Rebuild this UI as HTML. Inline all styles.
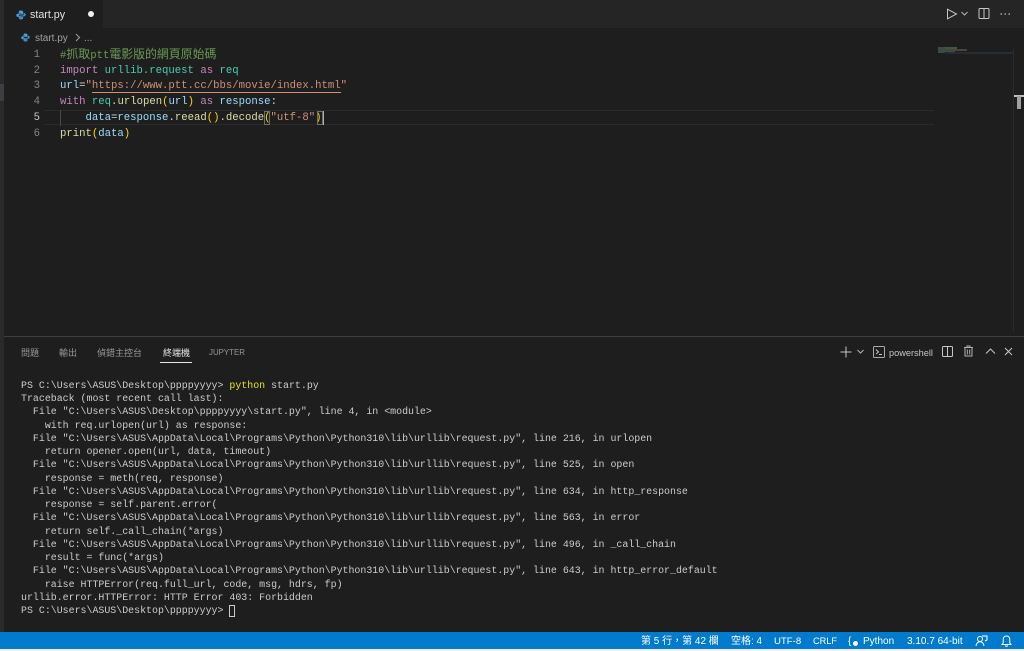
<!DOCTYPE html>
<html><head><meta charset="utf-8">
<style>
html,body{margin:0;padding:0;background:#1e1e1e;}
#r{position:relative;width:1024px;height:651px;overflow:hidden;background:#1e1e1e;font-family:"Liberation Sans","Noto Sans CJK TC",sans-serif;}
.a{position:absolute;}
.l{position:absolute;white-space:pre;font-family:"Liberation Mono","Noto Sans CJK TC",monospace;}
.e{left:60px;font-size:10.63px;line-height:16px;height:16px;color:#d4d4d4;}
.n{position:absolute;left:20px;width:20px;text-align:right;font-family:"Liberation Mono",monospace;font-size:10.63px;line-height:16px;color:#858585;}
.t{left:21px;font-size:9.93px;line-height:13px;color:#cccccc;}
.k{color:#c586c0}.c{color:#4ec9b0}.v{color:#9cdcfe}.s{color:#ce9178}.y{color:#ffd700}.f{color:#dcdcaa}.g{color:#6a9955}
.tab{position:absolute;top:347px;font-size:9px;line-height:12px;color:#969696;white-space:nowrap;}
.st{position:absolute;top:635px;font-size:10px;line-height:13px;color:#fff;white-space:nowrap;}
svg{position:absolute;overflow:visible;}
</style></head><body><div id="r">
<div class="a" style="left:0;top:0;width:1024px;height:28px;background:#252526"></div>
<div class="a" style="left:4px;top:0;width:99px;height:28px;background:#1e1e1e"></div>
<div class="a" style="left:0;top:0;width:4px;height:632px;background:#2a2a2b"></div>
<div class="a" style="left:0;top:84px;width:4px;height:17px;background:#3d3d42"></div>

<svg style="left:16px;top:10px" width="10" height="10" viewBox="0 0 10 10"><path d="M5 0.5C3 0.5 2.8 1.3 2.8 2.2V3.2H5.2V3.6H1.8C0.8 3.6 0.3 4.4 0.3 5.3S0.8 7 1.8 7H2.8V5.8C2.8 5 3.4 4.5 4.1 4.5H6C6.7 4.5 7.2 4 7.2 3.3V2C7.2 1 6.3 .5 5 .5Z" fill="#4b9fd8"/><path d="M5 9.5C7 9.5 7.2 8.7 7.2 7.8V6.8H4.8V6.4H8.2C9.2 6.4 9.7 5.6 9.7 4.7S9.2 3 8.2 3H7.6V4.2C7.6 5 7 5.5 6.3 5.5H4C3.3 5.5 2.8 6 2.8 6.7V8C2.8 9 3.7 9.5 5 9.5Z" fill="#3f8fc6"/></svg>
<div class="a" style="left:30px;top:9px;font-size:10.7px;line-height:13px;color:#e0e0e0">start.py</div>
<div class="a" style="left:88px;top:11px;width:6px;height:6px;border-radius:50%;background:#f0f0f0"></div>

<svg style="left:946px;top:8px" width="12" height="12" viewBox="0 0 12 12"><path d="M1.5 1.2V10.8L10.5 6Z" fill="none" stroke="#c5c5c5" stroke-width="1"/></svg>
<svg style="left:961px;top:11px" width="7" height="5" viewBox="0 0 7 5"><path d="M.5 1L3.5 4L6.5 1" fill="none" stroke="#b5b5b5" stroke-width="1"/></svg>
<svg style="left:978px;top:8px" width="12" height="11" viewBox="0 0 12 11"><rect x="1" y=".5" width="10" height="10" rx="1" fill="none" stroke="#c5c5c5"/><path d="M6 .5V10.5" stroke="#c5c5c5"/></svg>
<svg style="left:1000px;top:13px" width="11" height="3" viewBox="0 0 11 3"><circle cx="1.2" cy="1" r=".8" fill="#c5c5c5"/><circle cx="5.2" cy="1" r=".8" fill="#c5c5c5"/><circle cx="9.2" cy="1" r=".8" fill="#c5c5c5"/></svg>

<svg style="left:21px;top:33px" width="9" height="9" viewBox="0 0 10 10"><path d="M5 0.5C3 0.5 2.8 1.3 2.8 2.2V3.2H5.2V3.6H1.8C0.8 3.6 0.3 4.4 0.3 5.3S0.8 7 1.8 7H2.8V5.8C2.8 5 3.4 4.5 4.1 4.5H6C6.7 4.5 7.2 4 7.2 3.3V2C7.2 1 6.3 .5 5 .5Z" fill="#4b9fd8"/><path d="M5 9.5C7 9.5 7.2 8.7 7.2 7.8V6.8H4.8V6.4H8.2C9.2 6.4 9.7 5.6 9.7 4.7S9.2 3 8.2 3H7.6V4.2C7.6 5 7 5.5 6.3 5.5H4C3.3 5.5 2.8 6 2.8 6.7V8C2.8 9 3.7 9.5 5 9.5Z" fill="#3f8fc6"/></svg>
<div class="a" style="left:35px;top:32px;font-size:10px;line-height:13px;color:#a0a0a0">start.py</div>
<svg style="left:75px;top:33px" width="6" height="9" viewBox="0 0 6 9"><path d="M1 1L4.5 4.5L1 8" fill="none" stroke="#a0a0a0"/></svg>
<div class="a" style="left:84px;top:32px;font-size:10px;line-height:13px;color:#a0a0a0">...</div>

<div class="a" style="left:44px;top:110px;width:890px;height:15px;border-top:1px solid #2a2a2a;border-bottom:1px solid #2a2a2a;box-sizing:border-box"></div>
<div class="a" style="left:60px;top:110px;width:1px;height:16px;background:#484848"></div>

<div class="n" style="top:47px">1</div>
<div class="n" style="top:63px">2</div>
<div class="n" style="top:78px">3</div>
<div class="n" style="top:94px">4</div>
<div class="n" style="top:110px;color:#c6c6c6">5</div>
<div class="n" style="top:126px">6</div>

<div class="l e g" style="top:47px">#<span style="font-size:11.9px">抓取</span>ptt<span style="font-size:11.9px">電影版的網頁原始碼</span></div>
<div class="l e" style="top:63px"><span class="k">import</span> <span class="c">urllib.request</span> <span class="k">as</span> <span class="c">req</span></div>
<div class="l e" style="top:78px"><span class="v">url</span>=<span class="s">"<span style="border-bottom:1px solid #ce9178">https://www.ptt.cc/bbs/movie/index.html</span>"</span></div>
<div class="l e" style="top:94px"><span class="k">with</span> <span class="c">req</span>.<span class="f">urlopen</span><span class="y">(</span><span class="v">url</span><span class="y">)</span> <span class="k">as</span> <span class="v">response</span>:</div>
<div class="l e" style="top:110px">    <span class="v">data</span>=<span class="v">response</span>.<span class="f">reead</span><span class="y">()</span>.<span class="f">decode</span><span class="y">(</span><span class="s">"utf-8"</span><span class="y">)</span></div>
<div class="l e" style="top:126px"><span class="f">print</span><span class="y">(</span><span class="v">data</span><span class="y">)</span></div>
<div class="a" style="left:264px;top:111px;width:6px;height:14px;border:1px solid #6f6f6f;box-sizing:border-box"></div>
<div class="a" style="left:317px;top:111px;width:6px;height:14px;border:1px solid #6f6f6f;box-sizing:border-box"></div>
<div class="a" style="left:323px;top:111px;width:1px;height:14px;background:#aeafad"></div>

<div class="a" style="left:938px;top:47px;width:7px;height:6px;background:#3c4a44"></div>
<div class="a" style="left:945px;top:47px;width:12px;height:2px;background:#3f5a3c"></div>
<div class="a" style="left:945px;top:49px;width:22px;height:2px;background:#4a4340"></div>
<div class="a" style="left:945px;top:51px;width:10px;height:1px;background:#3d4a52"></div>
<div class="a" style="left:946px;top:52px;width:67px;height:2px;background:#232d36"></div>
<div class="a" style="left:1013px;top:47px;width:1px;height:285px;background:#2a2a2a"></div>
<div class="a" style="left:1014px;top:95px;width:10px;height:2px;background:#c0c0c0"></div>
<div class="a" style="left:1017px;top:96px;width:4px;height:13px;background:#a0a0a0"></div>

<div class="a" style="left:4px;top:336px;width:1020px;height:1px;background:#3f3f3f"></div>
<div class="tab" style="left:21px">問題</div>
<div class="tab" style="left:59px">輸出</div>
<div class="tab" style="left:97px">偵錯主控台</div>
<div class="tab" style="left:163px;color:#e7e7e7">終端機</div>
<div class="tab" style="left:209px;font-size:7.9px">JUPYTER</div>
<div class="a" style="left:160px;top:362px;width:32px;height:1px;background:#e7e7e7"></div>

<svg style="left:840px;top:346px" width="12" height="12" viewBox="0 0 12 12"><path d="M6 .5V11.5M.5 6H11.5" stroke="#c5c5c5" stroke-width="1"/></svg>
<svg style="left:857px;top:349px" width="7" height="5" viewBox="0 0 7 5"><path d="M.5 1L3.5 4L6.5 1" fill="none" stroke="#b5b5b5"/></svg>
<svg style="left:873px;top:346px" width="12" height="12" viewBox="0 0 12 12"><rect x=".5" y=".5" width="11" height="11" rx="1" fill="none" stroke="#a8a8a8"/><path d="M3 3.5L5.5 6L3 8M6 8.5H9" fill="none" stroke="#c5c5c5"/></svg>
<div class="a" style="left:889px;top:347px;font-size:9.2px;line-height:12px;color:#c5c5c5">powershell</div>
<svg style="left:942px;top:346px" width="11" height="11" viewBox="0 0 11 11"><rect x=".5" y=".5" width="10" height="10" rx="1" fill="none" stroke="#c5c5c5"/><path d="M5.5 .5V10.5" stroke="#c5c5c5"/></svg>
<svg style="left:963px;top:345px" width="11" height="12" viewBox="0 0 11 12"><path d="M1 2.5H10M4 2.5V1H7V2.5M2 2.5V11H9V2.5M4.3 4.5V9.5M6.7 4.5V9.5" fill="none" stroke="#b0b0b0"/></svg>
<svg style="left:985px;top:347px" width="11" height="8" viewBox="0 0 11 8"><path d="M1 6.5L5.5 2L10 6.5" fill="none" stroke="#c5c5c5"/></svg>
<svg style="left:1004px;top:347px" width="9" height="9" viewBox="0 0 9 9"><path d="M1 1L8 8M8 1L1 8" fill="none" stroke="#c5c5c5"/></svg>

<div class="l t" style="top:379px">PS C:\Users\ASUS\Desktop\ppppyyyy&gt; <span style="color:#e5e510">python</span> start.py</div>
<div class="l t" style="top:392px">Traceback (most recent call last):</div>
<div class="l t" style="top:405px">  File "C:\Users\ASUS\Desktop\ppppyyyy\start.py", line 4, in &lt;module&gt;</div>
<div class="l t" style="top:419px">    with req.urlopen(url) as response:</div>
<div class="l t" style="top:432px">  File "C:\Users\ASUS\AppData\Local\Programs\Python\Python310\lib\urllib\request.py", line 216, in urlopen</div>
<div class="l t" style="top:445px">    return opener.open(url, data, timeout)</div>
<div class="l t" style="top:458px">  File "C:\Users\ASUS\AppData\Local\Programs\Python\Python310\lib\urllib\request.py", line 525, in open</div>
<div class="l t" style="top:472px">    response = meth(req, response)</div>
<div class="l t" style="top:485px">  File "C:\Users\ASUS\AppData\Local\Programs\Python\Python310\lib\urllib\request.py", line 634, in http_response</div>
<div class="l t" style="top:498px">    response = self.parent.error(</div>
<div class="l t" style="top:511px">  File "C:\Users\ASUS\AppData\Local\Programs\Python\Python310\lib\urllib\request.py", line 563, in error</div>
<div class="l t" style="top:525px">    return self._call_chain(*args)</div>
<div class="l t" style="top:538px">  File "C:\Users\ASUS\AppData\Local\Programs\Python\Python310\lib\urllib\request.py", line 496, in _call_chain</div>
<div class="l t" style="top:551px">    result = func(*args)</div>
<div class="l t" style="top:564px">  File "C:\Users\ASUS\AppData\Local\Programs\Python\Python310\lib\urllib\request.py", line 643, in http_error_default</div>
<div class="l t" style="top:578px">    raise HTTPError(req.full_url, code, msg, hdrs, fp)</div>
<div class="l t" style="top:591px">urllib.error.HTTPError: HTTP Error 403: Forbidden</div>
<div class="l t" style="top:604px">PS C:\Users\ASUS\Desktop\ppppyyyy&gt;</div>
<div class="a" style="left:229px;top:605px;width:6px;height:12px;border:1px solid #c8c8c8;box-sizing:border-box"></div>

<div class="a" style="left:0;top:632px;width:1024px;height:17px;background:#007acc"></div>
<div class="a" style="left:0;top:649px;width:1024px;height:2px;background:#f0f0f0"></div>
<div class="st" style="left:641px">第 5 行，第 42 欄</div>
<div class="st" style="left:731px">空格: 4</div>
<div class="st" style="left:774px;font-size:9.6px">UTF-8</div>
<div class="st" style="left:813px;font-size:9.2px">CRLF</div>
<div class="st" style="left:848px">{</div>
<div class="a" style="left:853px;top:641px;width:5px;height:5px;border-radius:50%;background:#fff"></div>
<div class="st" style="left:863px">Python</div>
<div class="st" style="left:907px">3.10.7 64-bit</div>
<svg style="left:975px;top:635px" width="13" height="12" viewBox="0 0 13 12"><circle cx="5" cy="4" r="2.5" fill="none" stroke="#fff"/><path d="M1 11C1.5 8 3 6.8 5 6.8S8.5 8 9 11M7 1H12V5L10 6" fill="none" stroke="#fff"/></svg>
<svg style="left:1001px;top:635px" width="11" height="12" viewBox="0 0 11 12"><path d="M1 9.5H10L8.8 8V4.5C8.8 2.5 7.5 1 5.5 1S2.2 2.5 2.2 4.5V8ZM4.2 10.5C4.5 11.5 6.5 11.5 6.8 10.5" fill="none" stroke="#fff"/></svg>
</div></body></html>
